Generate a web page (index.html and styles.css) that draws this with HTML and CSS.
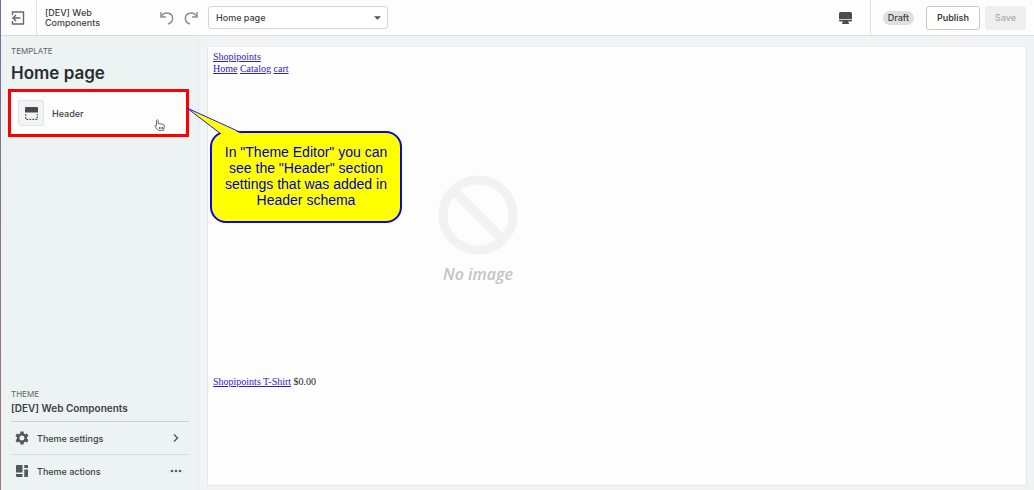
FILE: index.html
```html
<!DOCTYPE html>
<html lang="en">
<head>
<meta charset="utf-8">
<title>Theme Editor</title>
<link rel="stylesheet" href="styles.css">
</head>
<body>
<div class="editor">
  <header class="topbar">
    <button class="icon-button exit" aria-label="Exit">
      <svg width="14" height="14" viewBox="0 0 14 14" fill="none" stroke="#66696c" stroke-width="1.4"><path d="M1.500 4V1h11v12h-11v-3M9.500 7H2M5 4 2 7l3 3"/></svg>
    </button>
    <div class="theme-name">[DEV] Web Components</div>
    <div class="history">
      <button class="icon-button" aria-label="Undo">
        <svg width="14" height="14" viewBox="0 0 14 14" fill="none" stroke="#8c8f92" stroke-width="1.5"><path d="M1 1v5h5M1.3 5.6C3 2.500 6 1.600 8.500 2.200 13.600 3.600 14.600 10.500 8 13"/></svg>
      </button>
      <button class="icon-button" aria-label="Redo">
        <svg width="14" height="14" viewBox="0 0 14 14" fill="none" stroke="#8c8f92" stroke-width="1.5"><path d="M13 1v5H8M12.700 5.600C11 2.500 8 1.600 5.500 2.200.4 3.600-.6 10.500 6 13"/></svg>
      </button>
    </div>
    <div class="page-picker">
      <select aria-label="Page"><option>Home page</option></select>
      <svg class="caret" width="7" height="4" viewBox="0 0 8 4"><path d="M0 0h8L4 4z" fill="#505356"/></svg>
    </div>
    <button class="icon-button device" aria-label="Desktop view">
      <svg width="13" height="12" viewBox="0 0 13 12" fill="#4b4d50"><path d="M1.500 0h10Q13 0 13 1.500V7H0V1.500Q0 0 1.500 0zM0 7.800h13V8.500Q13 9.500 12 9.500H9V10.500h1V12H3v-1.500h1v-1H1Q0 9.500 0 8.500z"/></svg>
    </button>
    <div class="actions">
      <span class="badge">Draft</span>
      <button class="publish">Publish</button>
      <button class="save" disabled>Save</button>
    </div>
  </header>
  <div class="workspace">
    <aside class="sidebar">
      <p class="eyebrow">TEMPLATE</p>
      <h1>Home page</h1>
      <button class="section-item">
        <span class="section-icon">
          <svg width="13" height="13" viewBox="0 0 13 13"><path d="M1 0h11q1 0 1 1v4.500H0V1q0-1 1-1z" fill="#484b4e"/><path d="M.7 7v5.300h11.600V7" fill="none" stroke="#55585b" stroke-width="1.200" stroke-dasharray="1.800 1.200"/></svg>
        </span>
        <span>Header</span>
        <svg class="hand" width="11" height="12" viewBox="0 0 11 12" fill="#fff" stroke="#66696c" stroke-width="1"><path d="M2.500 6.500V1.500Q3.300 0 4.200 1.500V4.500L9 5.300Q10.500 5.700 10.400 7L9.500 11.400H4.500L1 7.500Q.5 6 2.500 6.800zM5.500 8v2M7 8v2M8.500 8v2"/></svg>
      </button>
      <div class="theme-panel">
        <p class="eyebrow">THEME</p>
        <h2>[DEV] Web Components</h2>
        <button class="row">
          <svg width="14" height="14" viewBox="0 0 14 14"><path d="M5.500.5h3l.4 2 1.200.7 2-.7 1.400 2.500-1.500 1.300v1.400L13.500 9l-1.400 2.500-2-.7-1.200.7-.4 2h-3l-.4-2-1.200-.7-2 .7L.5 9 2 7.700V6.300L.5 5l1.400-2.500 2 .7 1.200-.7zM7 4.500a2.500 2.500 0 1 0 0 5 2.500 2.500 0 0 0 0-5z" fill="#55585b" fill-rule="evenodd"/></svg>
          <span>Theme settings</span>
          <svg class="tail" width="12" height="8" viewBox="0 0 12 8" fill="none" stroke="#5a5d60" stroke-width="1.500"><path d="M4 .5 7.500 4 4 7.500"/></svg>
        </button>
        <button class="row">
          <svg width="14" height="14" viewBox="0 0 14 14" fill="#55585b"><path d="M2 1h5.500v7.500H1V2q0-1 1-1zM1 10h6.500v3H2q-1 0-1-1zM9.300 1H12q1 0 1 1v2H9.300zM9.300 5.500H13V12q0 1-1 1H9.300z"/></svg>
          <span>Theme actions</span>
          <svg class="tail" width="12" height="4" viewBox="0 0 12 4" fill="#5a5d60"><circle cx="2" cy="2" r="1.300"/><circle cx="6" cy="2" r="1.300"/><circle cx="10" cy="2" r="1.300"/></svg>
        </button>
      </div>
    </aside>
    <main class="preview">
      <nav class="store-nav">
        <div><a href="#">Shopipoints</a></div>
        <div><a href="#">Home</a> <a href="#">Catalog</a> <a href="#">cart</a></div>
      </nav>
      <figure class="no-image">
        <svg width="80" height="80" viewBox="0 0 80 80" fill="none" stroke="#f2f2f2" stroke-width="9"><circle cx="40" cy="40" r="35"/><path d="M16 16l48 48"/></svg>
        <figcaption>No image</figcaption>
      </figure>
      <p class="product"><a href="#">Shopipoints T-Shirt</a> $0.00</p>
    </main>
  </div>
  <div class="callout">
    <svg class="pointer" width="56" height="30" viewBox="0 0 56 30"><path d="M1 1 35 27 56 27z" fill="#ff0"/><path d="M35 27 1 1l55 25" fill="none" stroke="#1a1ae0"/></svg>
    In "Theme Editor" you can see the "Header" section settings that was added in Header schema
  </div>
</div>
</body>
</html>
```
FILE: styles.css
```css
* { box-sizing: border-box; }
body, h1, h2, p, figure { margin: 0; }
body {
  font-family: Inter, "Liberation Sans", sans-serif;
  font-size: 9px;
  font-weight: 500;
  color: #3c3f43;
}
button {
  font: inherit;
  color: inherit;
  margin: 0;
  padding: 0;
  border: 0;
  background: none;
}
svg { display: block; flex: none; }
.editor {
  position: relative;
  display: flex;
  flex-direction: column;
  height: 100vh;
  background: #f1f3f4;
  overflow: hidden;
}
.editor::before {
  content: "";
  position: absolute;
  inset: 0 auto 0 0;
  width: 1px;
  background: linear-gradient(#77709a, #a57474);
  z-index: 1;
}
.topbar {
  display: flex;
  align-items: center;
  flex: none;
  height: 36px;
  background: #fdfdfe;
  border-bottom: 1px solid #d5dde2;
}
.icon-button { display: flex; align-items: center; justify-content: center; }
.exit {
  align-self: stretch;
  width: 37px;
  border-right: 1px solid #dfe1e5;
}
.theme-name {
  width: 116px;
  padding: 0 40px 0 8px;
  line-height: 10px;
}
.history { display: flex; gap: 10px; width: 55px; padding-left: 7px; }
.page-picker { position: relative; width: 180px; }
.page-picker select {
  display: block;
  width: 100%;
  height: 23px;
  padding: 0 7px;
  appearance: none;
  border: 1px solid #d3d5d8;
  border-radius: 3px;
  background: #fff;
  font: inherit;
  color: inherit;
}
.caret { position: absolute; right: 7px; top: 10px; }
.device { margin-left: auto; padding-right: 18px; }
.actions {
  display: flex;
  align-items: center;
  align-self: stretch;
  padding: 0 8px 0 12px;
  border-left: 1px solid #dfe1e5;
}
.badge {
  padding: 0 5px;
  margin-right: 12px;
  line-height: 14px;
  border-radius: 7px;
  background: #dedfe0;
}
.publish, .save { height: 24px; border-radius: 3px; }
.publish {
  width: 54px;
  margin-right: 5px;
  border: 1px solid #c8cacd;
  background: #fff;
  font-weight: 600;
}
.save { width: 41px; background: #efeff0; color: #a9abad; }
.workspace { display: flex; flex: 1; min-height: 0; }
.sidebar {
  display: flex;
  flex-direction: column;
  flex: none;
  width: 199px;
  padding: 9px 9px 3px 8px;
  background: #edf2f3;
  border-right: 1px solid #e6eaec;
}
.eyebrow { padding-left: 3px; font-size: 8px; font-weight: 400; line-height: 12px; color: #606468; }
h1 {
  padding-left: 3px;
  margin: 4px 0;
  font-size: 17px;
  line-height: 24px;
  font-weight: 600;
  color: #2a2d31;
}
.section-item {
  display: flex;
  align-items: center;
  gap: 8px;
  height: 48px;
  padding: 0 21px 0 7px;
  border: 3px solid #f00;
  background: #fdfdfe;
}
.section-icon {
  display: grid;
  place-items: center;
  width: 26px;
  height: 26px;
  border: 1px solid #e2e4e6;
  border-radius: 2px;
  background: #f2f3f4;
}
.hand { margin-left: auto; align-self: flex-end; margin-bottom: 3px; }
.theme-panel { margin-top: auto; }
h2 {
  padding: 0 0 5px 3px;
  font-size: 10px;
  line-height: 16px;
  font-weight: 600;
}
.row {
  display: flex;
  align-items: center;
  gap: 8px;
  width: calc(100% - 3px);
  height: 33px;
  margin-left: 3px;
  padding: 0 7px 0 4px;
  border-top: 1px solid #cdd1d4;
}
.row:last-child { border-top-color: #d7dadd; }
.tail { margin-left: auto; }
.preview {
  display: flex;
  flex-direction: column;
  flex: 1;
  margin: 10px 7px 4px 8px;
  padding: 4px 5px;
  border: 1px solid #e5e7e9;
  border-top-color: #eceeef;
  background: #fefdfe;
  font-family: "Liberation Serif", serif;
  font-size: 10px;
  font-weight: 400;
  line-height: 12px;
  color: #222;
}
.preview a { color: #2a22c8; }
.no-image {
  width: 530px;
  max-width: 100%;
  padding-top: 100px;
  display: flex;
  flex-direction: column;
  align-items: center;
}
.no-image figcaption {
  margin-top: 9px;
  font: italic 600 16px/20px "Open Sans", sans-serif;
  color: #c4c4c4;
}
.product { margin-top: auto; padding-bottom: 93px; }
.callout {
  position: absolute;
  left: 210px;
  top: 131px;
  width: 192px;
  padding: 11px 10px 13px;
  border: 2px solid #0a0ad8;
  border-radius: 16px;
  background: #ff0;
  color: #0000c8;
  font: 14px/16px "Liberation Sans", sans-serif;
  text-align: center;
}
.pointer { position: absolute; left: -26px; top: -26px; }
```
